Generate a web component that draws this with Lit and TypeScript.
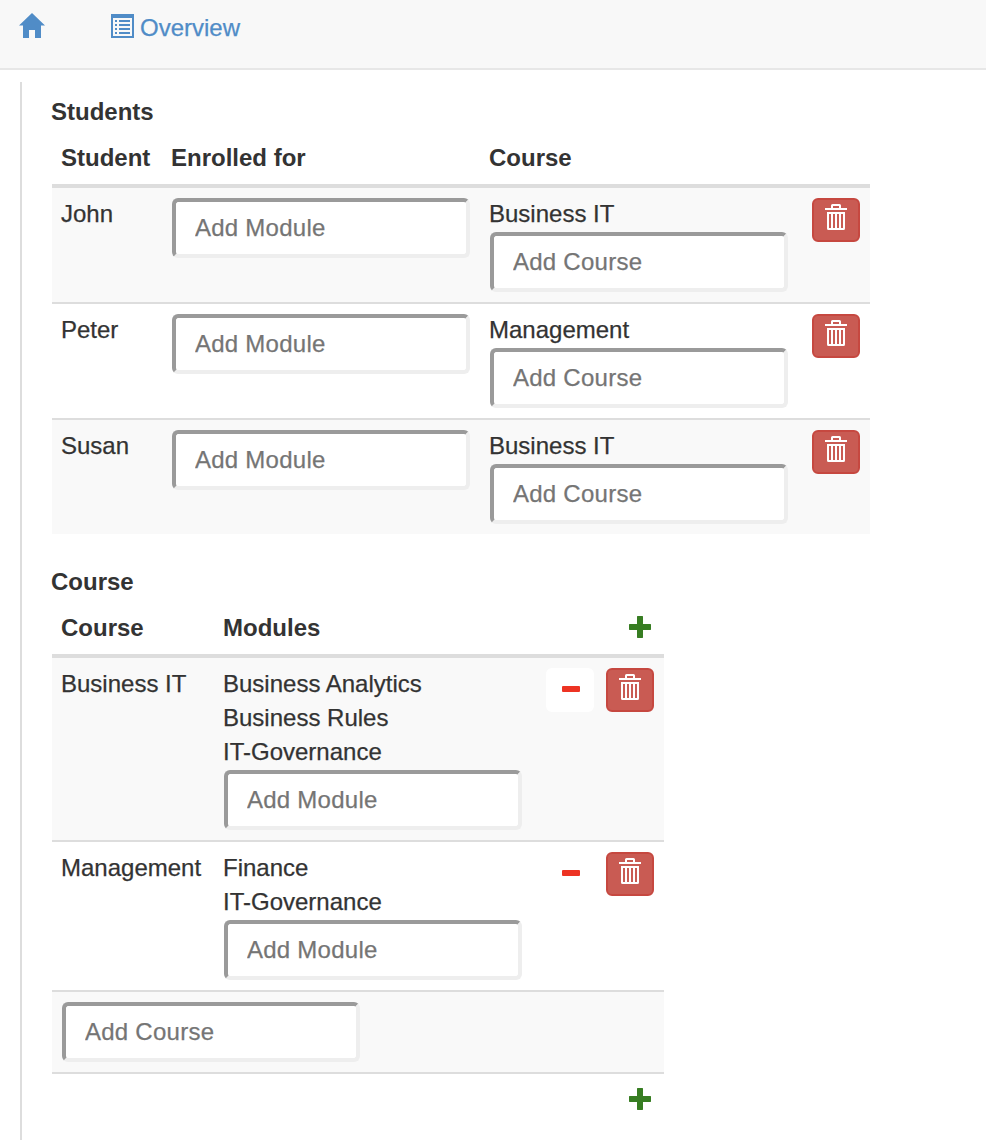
import { LitElement, html, css } from "lit";
import { customElement, property } from "lit/decorators.js";

const trash = html`<svg width="22" height="26" viewBox="0 0 22 26">
  <path fill="#fff" fill-rule="evenodd" d="M6 4V1.500Q6 0 7.500 0H14.500Q16 0 16 1.500V4H22V6H0V4ZM8 4H14V2H8Z" />
  <path fill="#fff" fill-rule="evenodd" d="M2 8H20V24.500Q20 26 18.500 26H3.500Q2 26 2 24.500ZM4 10V24H6V10ZM8 10V24H10V10ZM12 10V24H14V10ZM16 10V24H18V10Z" />
</svg>`;
const plus = html`<svg width="22" height="22" viewBox="0 0 22 22"><path fill="#377d22" d="M8.500 0H13.500L14 .5V8H21.500L22 8.500V13.500L21.500 14H14V21.500L13.500 22H8.500L8 21.500V14H.5L0 13.500V8.500L.5 8H8V.5Z" /></svg>`;
const minus = html`<svg width="18" height="6" viewBox="0 0 18 6"><rect width="18" height="6" rx="1" fill="#ed3323" /></svg>`;

@customElement("add-field")
export class AddField extends LitElement {
  @property() label = "";
  static styles = css`
    :host { display: block; width: 298px; height: 60px; }
    .field {
      display: block; box-sizing: border-box; width: 100%; height: 100%; margin: 0; padding: 0 20px 0 19px;
      border: 4px solid; border-color: #9a9a9a #eee #eee #9a9a9a; border-radius: 6px; background: #fff;
      font: 24px "Liberation Sans", Arial, sans-serif; letter-spacing: 0.25px; color: #333; outline: none;
      -webkit-text-stroke: 0.25px;
    }
    .field::placeholder { color: #757575; opacity: 1; }
  `;
  render() {
    return html`<input class="field" placeholder=${this.label} />`;
  }
}

interface Student { name: string; course: string; }
interface Course { name: string; modules: string[]; }

const students: Student[] = [
  { name: "John", course: "Business IT" },
  { name: "Peter", course: "Management" },
  { name: "Susan", course: "Business IT" },
];
const courses: Course[] = [
  { name: "Business IT", modules: ["Business Analytics", "Business Rules", "IT-Governance"] },
  { name: "Management", modules: ["Finance", "IT-Governance"] },
];

@customElement("app-root")
export class AppRoot extends LitElement {
  static styles = css`
    :host {
      display: flex; flex-direction: column; height: 1140px; overflow: hidden; background: #fff;
      font: 24px/34px "Liberation Sans", Arial, sans-serif; color: #333; -webkit-text-stroke: 0.25px;
    }
    svg { display: block; }
    .nav {
      box-sizing: border-box; flex: none; height: 70px; display: flex; align-items: flex-start;
      padding: 11px 19px 0; background: #f8f8f8; border-bottom: 2px solid #e7e7e7;
    }
    .nav a { display: flex; color: #508cc7; }
    .home { width: 92px; padding-top: 2px; }
    .list { padding: 3px 6px 0 0; }
    .content { flex: 1; margin: 12px 0 0 20px; border-left: 2px solid #ddd; padding: 13px 0 0 30px; }
    .title { height: 35px; margin-left: -1px; font-weight: bold; -webkit-text-stroke: 0; }
    .title.second { margin-top: 31px; }
    .row { display: grid; padding: 10px; border-top: 2px solid #ddd; }
    .students { width: 818px; }
    .courses { width: 612px; }
    .students .row { grid-template-columns: 110px 318px 322px 48px; }
    .courses .row { grid-template-columns: 162px 322px 60px 48px; }
    .row.head { border-top: 0; font-weight: bold; -webkit-text-stroke: 0; }
    .row.first { border-top-width: 4px; }
    .striped { background: #f9f9f9; }
    .text { margin: -1px 0 1px -1px; }
    .head .text { margin: 1px 0 -1px -1px; }
    .btn {
      box-sizing: border-box; width: 48px; height: 44px; border-radius: 6px; border: 2px solid #c64840;
      background: #c95b53; display: flex; justify-content: center; padding: 4px 0 0; margin: 0;
    }
    .btn.plain { border-color: #fff; background: #fff; padding: 16px 0 0 2px; }
    .plus { padding: 6px 0 0 23px; }
    .plus.foot { padding-top: 4px; }
  `;

  render() {
    return html`
      <nav class="nav">
        <a class="home"><svg width="26" height="25" viewBox="0 0 26 25"><path fill="currentColor" d="M13 0L26 12.500H22V25H16V17H10V25H4V12.500H0Z" /></svg></a>
        <a><span class="list"><svg width="23" height="24" viewBox="0 0 23 24">
          <path fill="currentColor" fill-rule="evenodd" d="M0 0H23V24H0ZM2 4V22H21V4Z" />
          <path fill="currentColor" d="M4 6h2v2h-2zM8 6h11v2h-11zM4 10h2v2h-2zM8 10h11v2h-11zM4 14h2v2h-2zM8 14h11v2h-11zM4 18h2v2h-2zM8 18h11v2h-11z" />
        </svg></span><span>Overview</span></a>
      </nav>
      <main class="content">
        <div class="title">Students</div>
        <section class="students">
          <div class="row head"><div class="text">Student</div><div class="text">Enrolled for</div><div class="text">Course</div></div>
          ${students.map((s, i) => html`<div class="row ${i === 0 ? "first" : ""} ${i % 2 ? "" : "striped"}">
            <div class="text">${s.name}</div>
            <add-field label="Add Module"></add-field>
            <div><div class="text">${s.course}</div><add-field label="Add Course"></add-field></div>
            <button class="btn" aria-label="Delete">${trash}</button>
          </div>`)}
        </section>
        <div class="title second">Course</div>
        <section class="courses">
          <div class="row head"><div class="text">Course</div><div class="text">Modules</div><div></div><div class="plus">${plus}</div></div>
          ${courses.map((c, i) => html`<div class="row ${i === 0 ? "first" : ""} ${i % 2 ? "" : "striped"}">
            <div class="text">${c.name}</div>
            <div>${c.modules.map((m) => html`<div class="text">${m}</div>`)}<add-field label="Add Module"></add-field></div>
            <button class="btn plain" aria-label="Remove">${minus}</button>
            <button class="btn" aria-label="Delete">${trash}</button>
          </div>`)}
          <div class="row striped"><add-field label="Add Course"></add-field></div>
          <div class="row"><div></div><div></div><div></div><div class="plus foot">${plus}</div></div>
        </section>
      </main>
    `;
  }
}
